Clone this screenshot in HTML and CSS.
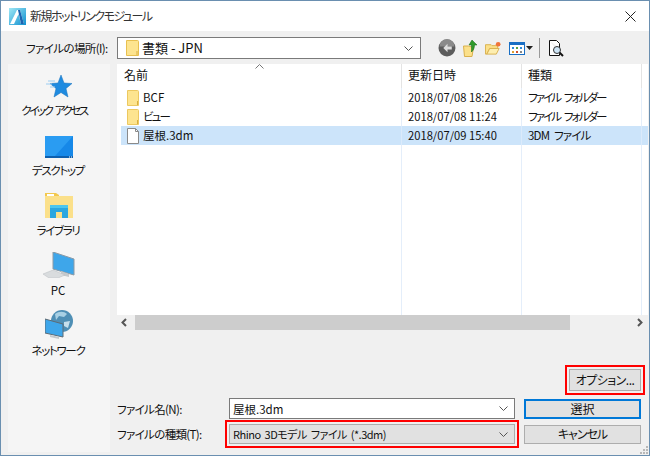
FILE: index.html
```html
<!DOCTYPE html>
<html lang="ja">
<head>
<meta charset="utf-8">
<title>新規ホットリンクモジュール</title>
<link rel="stylesheet" href="styles.css">
</head>
<body>
<div class="window">
  <header class="titlebar">
    <svg class="app-icon" width="17" height="17" viewBox="0 0 17 17"><defs><linearGradient id="ag" x1="0" y1="0" x2="1" y2="1"><stop offset="0" stop-color="#9fe8f5"/><stop offset="1" stop-color="#0f8fd0"/></linearGradient></defs><rect width="17" height="17" fill="url(#ag)"/><path d="M1 16 8 2h3l4 14h-3L9.500 6 5 16z" fill="#fff"/><path d="M9 2h2l4 14h-3z" fill="#1c64b0"/></svg>
    <span class="title-text">新規ホットリンクモジュール</span>
    <svg class="close" width="11" height="11" viewBox="0 0 11 11"><path d="M.5.500l10 10M10.500.500l-10 10" stroke="#222" stroke-width="1" fill="none"/></svg>
  </header>
  <div class="body">
    <div class="location-row">
      <span class="location-label">ファイルの場所(I):</span>
      <div class="combo location-combo">
        <svg class="folder-sm" width="13" height="16" viewBox="0 0 13 16"><path d="M.5.500h11a1 1 0 0 1 1 1v14H.500z" fill="#fde48f" stroke="#e8c050"/><path d="M11 11v4" stroke="#d8ae40"/></svg>
        <span class="combo-value">書類 - JPN</span>
        <svg class="chev" width="9" height="5" viewBox="0 0 9 5"><path d="M.5.500l4 4 4-4" fill="none" stroke="#555"/></svg>
      </div>
      <div class="tools">
        <svg width="18" height="18" viewBox="0 0 17 17"><circle cx="8.500" cy="8.500" r="8" fill="#5c5c5c"/><path d="M1.500 7a7 7 0 0 1 14 0z" fill="#8a8a8a"/><path d="M9 4.500 5 8.500l4 4v-2.500h4V7H9z" fill="#ddd"/></svg>
        <svg width="15" height="18" viewBox="0 0 15 18"><path d="M.5 7h5l5 1.500-1.500 9H1.500z" fill="#fbe08a" stroke="#d9b04c"/><path d="M9 1l5 5h-2.500c0 3-1 5-3 7V6H6z" fill="#2f9a2c" stroke="#14640f" stroke-width=".5"/></svg>
        <svg width="16" height="14" viewBox="0 0 17 14"><path d="M.5 3.500h6l1 1h6v3H5L2 13.500H.500z" fill="#fbe08a" stroke="#d9b04c"/><path d="M2 13.500 5 7.500h10l-3 6z" fill="#fdeeb0" stroke="#d9b04c"/><circle cx="14" cy="3" r="2.500" fill="#f0743a"/></svg>
        <span class="view-btn">
          <svg width="16" height="13" viewBox="0 0 16 13"><rect x=".5" y=".5" width="15" height="12" fill="#fff" stroke="#1a6fc4"/><rect x="1" y="1" width="14" height="2" fill="#1a6fc4"/><path d="M3 5h2v2H3z" fill="#2f8ad8"/><path d="M7 5h2v2H7z" fill="#5aa040"/><path d="M11 5h2v2h-2z" fill="#2f8ad8"/><path d="M3 9h2v2H3z" fill="#e0a030"/><path d="M7 9h2v2H7z" fill="#d05030"/><path d="M11 9h2v2h-2z" fill="#888"/></svg>
          <svg width="7" height="4" viewBox="0 0 7 4"><path d="M0 0h7L3.500 4z" fill="#222"/></svg>
        </span>
        <span class="tool-sep"></span>
        <svg width="16" height="17" viewBox="0 0 16 17"><path d="M1.500.500h7l3 3v5M11.500 14v1.500h-10V.500" fill="#fff" stroke="#111"/><circle cx="9" cy="10" r="3.500" fill="#cfe6f7" stroke="#333"/><path d="M11.500 12.500l3.500 3.500" stroke="#111" stroke-width="2"/></svg>
      </div>
    </div>
    <div class="main">
      <nav class="sidebar">
        <div class="place place-quick">
          <svg width="26" height="25" viewBox="0 0 26 25"><path d="M15 1l3 8 8 .5-6 5 2 8.500-7-4.500-7 4.500 2-8.500-6-5 8-.5z" fill="#1f8be0" stroke="#1570bd" stroke-width=".5"/><path d="M2 7h7M0 10h6M4 13h5" stroke="#9ccdf2" fill="none"/></svg>
          <span>クイック アクセス</span>
        </div>
        <div class="place place-desktop">
          <svg width="28" height="22" viewBox="0 0 28 22"><rect width="28" height="22" fill="#1688e8"/><path d="M0 0h28L10 20H0z" fill="#2a9cf2"/><path d="M0 20h28v2H0z" fill="#0d5fae"/><path d="M24 21h1M26 21h1" stroke="#fff"/></svg>
          <span>デスクトップ</span>
        </div>
        <div class="place place-lib">
          <svg width="28" height="25" viewBox="0 0 28 25"><path d="M0 0h11l3 2v3H0z" fill="#f2c84e"/><rect x="2" y="1" width="7" height="2" fill="#fff"/><path d="M0 3h28v22H0z" fill="#fbe08a"/><path d="M5 25V12h18v13h-6v-6h-6v6z" fill="#2ba7e0"/><path d="M5 12h18v3H5z" fill="#4cc6ef"/></svg>
          <span>ライブラリ</span>
        </div>
        <div class="place place-pc">
          <svg width="32" height="26" viewBox="0 0 32 26"><path d="M10 0l21 7v16L10 17z" fill="#3ea6ea" stroke="#8c9aa5"/><path d="M18 19l8 3v3l-8-2z" fill="#c5c9cc"/><path d="M0 22l10-4 12 5-7 3H6z" fill="#d9dcde" stroke="#b8bcc0" stroke-width=".5"/></svg>
          <span class="latin">PC</span>
        </div>
        <div class="place place-net">
          <svg width="28" height="29" viewBox="0 0 28 29"><circle cx="17" cy="11" r="11" fill="#4f8fb5"/><path d="M10 4c4-3 9-3 12 0l-3 3-5-1-3 4z" fill="#a8d0e4"/><path d="M19 12l6-1-2 7-4-2z" fill="#c6dfec"/><path d="M0 9l18 5v13L0 23z" fill="#3ea6ea" stroke="#5d6b75"/><path d="M5 25l9 2v2l-9-2z" fill="#c5c9cc"/></svg>
          <span>ネットワーク</span>
        </div>
      </nav>
      <div class="right">
        <div class="list">
          <div class="list-head">
            <span class="col col-name">名前<svg class="sort" width="9" height="5" viewBox="0 0 9 5"><path d="M.5 4.500l4-4 4 4" fill="none" stroke="#777"/></svg></span>
            <span class="col col-date">更新日時</span>
            <span class="col col-type">種類</span>
            <span class="col col-rest"></span>
          </div>
          <div class="rows">
            <div class="row">
              <span class="col col-name"><svg class="ficon" width="12" height="16" viewBox="0 0 12 16"><path d="M.5.500h10a1 1 0 0 1 1 1v14H.500z" fill="#fde48f" stroke="#ecc860"/><path d="M10.500 11v4" stroke="#d8ae40"/></svg>BCF</span>
              <span class="col col-date">2018/07/08 18:26</span>
              <span class="col col-type kana-narrow">ファイル フォルダー</span>
              <span class="col col-rest"></span>
            </div>
            <div class="row">
              <span class="col col-name kana-narrow"><svg class="ficon" width="12" height="16" viewBox="0 0 12 16"><path d="M.5.500h10a1 1 0 0 1 1 1v14H.500z" fill="#fde48f" stroke="#ecc860"/><path d="M10.500 11v4" stroke="#d8ae40"/></svg>ビュー</span>
              <span class="col col-date">2018/07/08 11:24</span>
              <span class="col col-type kana-narrow">ファイル フォルダー</span>
              <span class="col col-rest"></span>
            </div>
            <div class="row row-selected">
              <span class="col col-name"><svg class="ficon" width="12" height="16" viewBox="0 0 12 16"><path d="M.5.500h8l3 3v12H.500z" fill="#fff" stroke="#8a8a8a"/><path d="M8.500.500v3h3" fill="none" stroke="#8a8a8a"/></svg>屋根.3dm</span>
              <span class="col col-date">2018/07/09 15:40</span>
              <span class="col col-type mixed-narrow">3DM ファイル</span>
              <span class="col col-rest"></span>
            </div>
            <div class="row-fill">
              <span class="col col-name"></span>
              <span class="col col-date"></span>
              <span class="col col-type"></span>
              <span class="col col-rest"></span>
            </div>
          </div>
          <div class="hscroll">
            <svg class="arrow" width="6" height="9" viewBox="0 0 6 9"><path d="M5 1 1.500 4.500 5 8" fill="none" stroke="#555" stroke-width="2"/></svg>
            <div class="track"><div class="thumb"></div></div>
            <svg class="arrow" width="6" height="9" viewBox="0 0 6 9"><path d="M1 1l3.500 3.500L1 8" fill="none" stroke="#555" stroke-width="2"/></svg>
          </div>
        </div>
        <div class="options-row">
          <button class="btn btn-options">オプション...</button>
        </div>
        <div class="form">
          <label class="form-label">ファイル名(N):</label>
          <div class="combo name-combo">
            <span class="combo-value">屋根.3dm</span>
            <svg class="chev" width="9" height="5" viewBox="0 0 9 5"><path d="M.5.500l4 4 4-4" fill="none" stroke="#555"/></svg>
          </div>
          <button class="btn btn-primary">選択</button>
          <label class="form-label">ファイルの種類(T):</label>
          <div class="combo type-combo">
            <span class="combo-value">Rhino 3Dモデル ファイル (*.3dm)</span>
            <svg class="chev" width="9" height="5" viewBox="0 0 9 5"><path d="M.5.500l4 4 4-4" fill="none" stroke="#555"/></svg>
          </div>
          <button class="btn btn-cancel">キャンセル</button>
        </div>
      </div>
    </div>
  </div>
  <svg class="grip" width="10" height="10" viewBox="0 0 10 10"><path d="M7 1h2v2H7zM4 4h2v2H4zM7 4h2v2H7zM1 7h2v2H1zM4 7h2v2H4zM7 7h2v2H7z" fill="#b8b8b8"/></svg>
</div>
</body>
</html>
```

FILE: styles.css
```css
* { box-sizing: border-box; }
html, body { margin: 0; padding: 0; }
body {
  width: 650px;
  height: 456px;
  overflow: hidden;
  font-family: "Noto Sans CJK JP", "Noto Sans", sans-serif;
  font-size: 11.5px;
  color: #111;
  font-feature-settings: "palt";
}
.window {
  position: relative;
  width: 650px;
  height: 456px;
  border: 1px solid #6a8fb0;
  background: #f0f0f0;
  display: flex;
  flex-direction: column;
}
.titlebar {
  height: 30px;
  flex: none;
  background: #fff;
  display: flex;
  align-items: center;
  padding: 0 13px 0 8px;
}
.title-text { margin-left: 4px; font-size: 12px; color: #333; line-height: 16px; letter-spacing: -1.5px; }
.close { margin-left: auto; }
.body { flex: 1; display: flex; flex-direction: column; min-height: 0; padding: 0 1px 3px 7px; }
.location-row {
  height: 33px;
  flex: none;
  display: flex;
  align-items: center;
  padding-top: 1px;
}
.location-label { width: 109px; padding-left: 18px; white-space: nowrap; line-height: 16px; letter-spacing: -.6px; }
.combo {
  display: flex;
  align-items: center;
  border: 1px solid #7a7a7a;
  background: #fff;
  font-size: 12px;
}
.combo-value { white-space: nowrap; line-height: 16px; }
.chev { margin-left: auto; flex: none; }
.location-combo { width: 304px; height: 22px; padding: 0 7px 0 8px; }
.folder-sm { margin-right: 3px; flex: none; }
.location-combo .combo-value { font-size: 13px; font-feature-settings: normal; }
.tools { display: flex; align-items: center; margin-left: 17px; gap: 7px; }
.tools svg { display: block; }
.view-btn { display: flex; align-items: center; gap: 1px; margin-left: 1px; }
.tool-sep { width: 1px; height: 20px; background: #9a9a9a; margin: 0 1px 0 -1px; }
.main { flex: 1; display: flex; min-height: 0; }
.sidebar {
  width: 102px;
  flex: none;
  background: #f5f5f5;
  display: flex;
  flex-direction: column;
  align-items: center;
  padding-top: 10px;
}
.place { display: flex; flex-direction: column; align-items: center; }
.place span { line-height: 16px; white-space: nowrap; margin: 3px 2px 0 0; font-size: 11.500px; letter-spacing: -1.3px; }
.place-quick span { letter-spacing: -2.4px; word-spacing: 3px; margin-right: 10px; }
.place-desktop { margin-top: 18px; }
.place-desktop span { margin-top: 4px; }
.place-lib { margin-top: 15px; }
.place-lib span { margin-top: 4px; }
.place-pc { margin-top: 14px; }
.place .latin { margin-top: 4px; letter-spacing: 0; }
.place-net { margin-top: 12px; }
.right { flex: 1; margin-left: 7px; display: flex; flex-direction: column; min-width: 0; }
.list { flex: none; height: 266px; background: #fff; display: flex; flex-direction: column; }
.list-head { height: 24px; flex: none; display: flex; position: relative; font-size: 12px; }
.list-head .col { line-height: 22px; }
.col { display: block; flex: none; height: 100%; white-space: nowrap; }
.col-name { width: 284px; padding-left: 7px; position: relative; }
.col-date { width: 120px; padding-left: 6px; border-left: 1px solid #e4e4e4; }
.col-type { width: 120px; padding-left: 6px; border-left: 1px solid #e4e4e4; }
.col-rest { flex: 1; border-left: 1px solid #e4e4e4; }
.sort { position: absolute; left: 138px; top: 0; }
.rows { flex: 1; display: flex; flex-direction: column; min-height: 0; }
.row { height: 19px; flex: none; display: flex; align-items: center; line-height: 19px; }
.row .col { border-left-color: #e4eefa; }
.row .col-date { font-size: 11.2px; }
.row .col-name { display: flex; align-items: center; padding-left: 10px; }
.row .kana-narrow { letter-spacing: -1.9px; word-spacing: 3px; }
.row .mixed-narrow { letter-spacing: -.8px; word-spacing: 3px; }
.ficon { margin-right: 4px; flex: none; }
.row-selected { background: #cce4fa; margin-left: 4px; }
.row-selected .col-name { width: 280px; padding-left: 6px; }
.row-selected .col { border-left-color: #dbeafb; }
.row-fill { flex: 1; display: flex; }
.row-fill .col { border-left-color: #e4eefa; }
.hscroll { height: 15px; flex: none; background: #f0f0f0; display: flex; align-items: center; padding: 0 5px 0 4px; }
.track { flex: 1; height: 100%; margin: 0 8px; }
.thumb { width: 435px; height: 100%; background: #cdcdcd; }
.arrow { flex: none; }
.options-row { flex: none; height: 68px; display: flex; justify-content: flex-end; align-items: flex-start; padding: 39px 7px 0 0; }
.btn {
  font-family: inherit;
  font-feature-settings: "palt";
  font-size: 12px;
  color: #111;
  background: #e1e1e1;
  border: 1px solid #adadad;
  padding: 0;
  line-height: 16px;
}
.btn-options {
  width: 72px;
  height: 22px;
  letter-spacing: -.5px;
  box-shadow: 0 0 0 2px #f0f0f0, 0 0 0 4px #f00;
}
.form {
  display: grid;
  grid-template-columns: 112px 286px 126px;
  grid-template-rows: 21px 20px;
  row-gap: 5px;
  align-items: center;
}
.form-label { white-space: nowrap; line-height: 16px; letter-spacing: -.65px; }
.name-combo { height: 21px; padding: 0 6px 0 3px; font-size: 11.5px; }
.type-combo {
  height: 20px;
  padding: 0 6px 0 3px;
  background: #e1e1e1;
  border-color: #adadad;
  font-size: 11px;
  letter-spacing: -.5px;
  word-spacing: 2px;
  box-shadow: 0 0 0 2px #f0f0f0, 0 0 0 4px #f00;
}
.btn-primary, .btn-cancel { margin-left: 9px; width: 117px; }
.btn-primary { height: 20px; border: 2px solid #0078d7; }
.btn-cancel { height: 19px; letter-spacing: -1px; }
.grip { position: absolute; right: 0; bottom: 0; }
```
